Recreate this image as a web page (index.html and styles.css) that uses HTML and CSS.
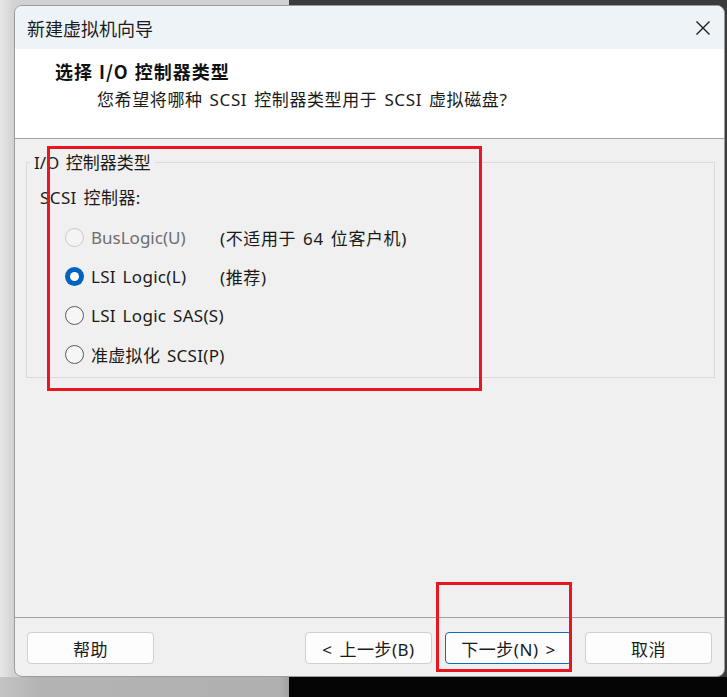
FILE: index.html
```html
<!DOCTYPE html>
<html lang="zh-CN">
<head>
<meta charset="utf-8">
<title>新建虚拟机向导</title>
<link rel="stylesheet" href="styles.css">
</head>
<body>
<div class="desktop">
  <div class="pane pane-light"></div>
  <div class="pane pane-shadow"></div>
  <div class="pane pane-black"></div>

  <div class="window">
    <div class="titlebar">
      <span class="title">新建虚拟机向导</span>
      <svg class="close" width="16" height="16" viewBox="0 0 16 16"><path d="M1.5 1.5 L14.5 14.5 M14.5 1.5 L1.5 14.5" stroke="#1c1c1c" stroke-width="1.4" fill="none"/></svg>
    </div>
    <div class="header">
      <div class="h-title">选择 I/O 控制器类型</div>
      <div class="h-sub">您希望将哪种 SCSI 控制器类型用于 SCSI 虚拟磁盘?</div>
    </div>
    <div class="body">
      <fieldset class="group">
        <legend>I/O 控制器类型</legend>
        <div class="group-label">SCSI 控制器:</div>
        <div class="row disabled">
          <span class="radio"></span>
          <span class="label">BusLogic(U)</span>
          <span class="note">(不适用于 64 位客户机)</span>
        </div>
        <div class="row">
          <span class="radio checked"></span>
          <span class="label">LSI Logic(L)</span>
          <span class="note">(推荐)</span>
        </div>
        <div class="row">
          <span class="radio"></span>
          <span class="label">LSI Logic SAS(S)</span>
        </div>
        <div class="row">
          <span class="radio"></span>
          <span class="label">准虚拟化 SCSI(P)</span>
        </div>
      </fieldset>
    </div>
    <div class="footer">
      <button class="btn">帮助</button>
      <div class="spacer"></div>
      <button class="btn">&lt; 上一步(B)</button>
      <button class="btn default">下一步(N) &gt;</button>
      <button class="btn">取消</button>
    </div>
  </div>

  <div class="mark mark-group"></div>
  <div class="mark mark-next"></div>
</div>
</body>
</html>
```

FILE: styles.css
```css
* { box-sizing: border-box; }
html, body { margin: 0; padding: 0; }
body {
  font-family: "Noto Sans", "Noto Sans CJK SC", sans-serif;
  color: #1a1a1a;
  background: #3b3b3b;
  word-spacing: 2px;
}
.desktop {
  position: relative;
  width: 727px;
  height: 697px;
  background: #3b3b3b;
  overflow: hidden;
}
.pane { position: absolute; }
.pane-light {
  left: 0; top: 0; width: 289px; height: 677px;
  background: linear-gradient(to right, #e6e6e6 0, #d2d2d2 14px);
}
.pane-shadow {
  left: 0; top: 677px; width: 289px; height: 20px;
  background: linear-gradient(to right, #c4c4c4, #b3b3b3 40px, #b0b0b0 280px, #a0a0a0);
}
.pane-black {
  left: 289px; top: 677px; right: 0; height: 20px;
  background: #050505;
}
.window {
  position: absolute;
  left: 14px; top: 5px;
  width: 711px; height: 672px;
  border: 1px solid #9c9c9c;
  border-radius: 8px;
  background: #f0f0f0;
  overflow: hidden;
  display: flex;
  flex-direction: column;
}
.titlebar {
  height: 43px;
  flex: none;
  background: #eef3f8;
  display: flex;
  align-items: center;
  justify-content: space-between;
  padding: 0 13px 0 12px;
}
.title {
  font-family: "Noto Sans CJK SC", sans-serif;
  font-size: 18px;
  color: #1b1b1b;
  word-spacing: 0;
}
.close { display: block; margin-top: 1px; }
.header {
  height: 90px;
  flex: none;
  background: #ffffff;
  border-bottom: 1px solid #a3a3a3;
  padding: 10px 0 0 40px;
}
.h-title {
  font-family: "Noto Sans CJK SC", sans-serif;
  font-weight: 700;
  font-size: 18px;
  letter-spacing: 1px;
  word-spacing: 1px;
  line-height: 25px;
  color: #111;
}
.h-sub {
  margin-top: 4px;
  padding-left: 42px;
  font-size: 17px;
  line-height: 24px;
  letter-spacing: 0.6px;
  color: #1a1a1a;
}
.body {
  flex: 1;
  padding: 12px 9px 0 11px;
}
.group {
  margin: 0;
  height: 227px;
  border: 1px solid #dadada;
  padding: 0 0 0 13px;
}
.group legend {
  margin-left: -10px;
  padding: 0 4px;
  font-size: 17px;
  line-height: 22px;
  color: #1a1a1a;
  position: relative;
  top: 1px;
}
.group-label {
  margin-top: 13px;
  font-size: 17px;
  line-height: 24px;
  margin-bottom: 8px;
  letter-spacing: 0.4px;
}
.row {
  display: flex;
  align-items: center;
  height: 39px;
  font-size: 17px;
}
.radio {
  flex: none;
  width: 19px;
  height: 19px;
  border-radius: 50%;
  border: 1px solid #5a5a5a;
  background: #f6f6f6;
  margin-left: 25px;
  position: relative;
}
.row.disabled .radio {
  border-color: #cacaca;
  background: #f4f4f4;
}
.radio.checked {
  border: none;
  background: #0063c0;
}
.radio.checked::after {
  content: "";
  position: absolute;
  left: 5px; top: 5px;
  width: 9px; height: 9px;
  border-radius: 50%;
  background: #ffffff;
}
.label {
  margin-left: 7px;
  width: 129px;
  flex: none;
  white-space: nowrap;
  letter-spacing: 0.3px;
}
.row.disabled .label { color: #6e6e6e; letter-spacing: 0; }
.note { white-space: nowrap; letter-spacing: 0.6px; }
.footer {
  height: 59px;
  flex: none;
  border-top: 1px solid #a3a3a3;
  display: flex;
  align-items: flex-start;
  padding: 14px 12px 0 12px;
  gap: 13px;
}
.spacer { flex: 1; }
.btn {
  width: 127px;
  height: 32px;
  font-family: "Noto Sans", "Noto Sans CJK SC", sans-serif;
  font-size: 17px;
  word-spacing: 2px;
  letter-spacing: 0.5px;
  color: #1a1a1a;
  background: #fdfdfd;
  border: 1px solid #d0d0d0;
  border-radius: 4px;
  padding: 0;
}
.btn.default { border-color: #1068c4; }
.mark {
  position: absolute;
  border: 3px solid #e8161f;
}
.mark-group { left: 47px; top: 146px; width: 435px; height: 245px; }
.mark-next { left: 436px; top: 582px; width: 136px; height: 90px; }
```
